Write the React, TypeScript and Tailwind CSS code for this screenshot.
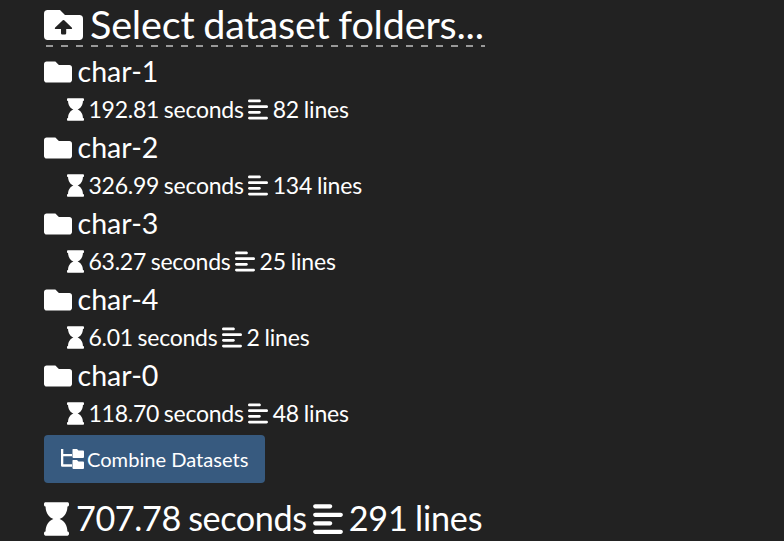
import React from "react";
import { FaHourglass, FaFolder } from "react-icons/fa";
import { FaAlignLeft } from "react-icons/fa6";

const folders = [
  { name: "char-1", seconds: "192.81", lines: 82 },
  { name: "char-2", seconds: "326.99", lines: 134 },
  { name: "char-3", seconds: "63.27", lines: 25 },
  { name: "char-4", seconds: "6.01", lines: 2 },
  { name: "char-0", seconds: "118.70", lines: 48 },
];

function UploadFolder() {
  return (
    <svg viewBox="0 0 39 30" className="h-[30px] w-[39px] shrink-0" fill="currentColor">
      <path fillRule="evenodd" d="M3.7 0H16l5 5h14.3A3.7 3.7 0 0 1 39 8.7v17.6a3.7 3.7 0 0 1-3.7 3.7H3.7A3.7 3.7 0 0 1 0 26.300V3.700A3.700 3.700 0 0 1 3.700 0zM18.800 10.300l-7.600 7.200c-.8.9-.4 1.500.6 1.500H17v4.300q0 1.200 1.200 1.200h2.800q1.200 0 1.200-1.200V19h4.900c1 0 1.400-.6.6-1.500l-7.500-7.200q-.7-.7-1.400 0z" />
    </svg>
  );
}

function TreeIcon() {
  return (
    <svg viewBox="0 0 23 20" className="h-5 w-[23px] shrink-0" fill="currentColor">
      <path d="M0 0h2.300v5H11v2.300H2.300V15.300H11v2.400H1.200Q0 17.700 0 16.500z" />
      <path d="M12 0h4l1.500 1.500H22q1 0 1 1V8q0 1-1 1H12.500q-1 0-1-1V.5q0-.5.5-.5zM12 11h4l1.500 1.500H22q1 0 1 1V19q0 1-1 1H12.500q-1 0-1-1v-7.500q0-.5.5-.5z" />
    </svg>
  );
}

export default function App() {
  return (
    <main className="h-[541px] overflow-hidden bg-[#222] px-11 font-['Lato',sans-serif] whitespace-nowrap text-white">
      <h1 className="flex h-[47px] w-[441px] flex-col text-[39.6px]">
        <span className="flex h-[45px] items-center gap-[7px] pt-[5px] leading-[50px]">
          <UploadFolder />
          <span className="-mt-0.5 tracking-[-0.2px] [word-spacing:-1px]">Select dataset folders...</span>
        </span>
        <span className="h-0.5 w-full bg-[repeating-linear-gradient(90deg,transparent_0_2px,#999_2px_9px,transparent_9px_15px)]" />
      </h1>
      {folders.map((f) => (
        <section key={f.name} className="h-[76px]">
          <div className="flex h-[49px] items-center gap-[5.5px] text-[28.6px]"><FaFolder className="size-7" />{f.name}</div>
          <div className="flex h-[27px] items-center pl-[23px] text-[23px]">
            <FaHourglass className="mr-[4.5px] h-[23px] w-[17px]" />
            <span className="tracking-[-0.25px] [word-spacing:-1px]">{f.seconds} seconds</span>
            <FaAlignLeft className="mr-[4.5px] ml-[4.5px] h-[23px] w-5" />
            <span className="tracking-[-0.15px] [word-spacing:-1px]">{f.lines} lines</span>
          </div>
        </section>
      ))}
      <button className="mt-2 flex h-12 w-[221px] items-center gap-[3px] rounded bg-[#375a7f] pl-[17px] text-[20.1px]"><TreeIcon />Combine Datasets</button>
      <footer className="mt-[11px] flex items-center text-[34.2px]">
        <FaHourglass className="mr-[7px] h-[34px] w-[25px]" />
        <span className="-mt-0.5 tracking-[-0.4px] [word-spacing:-1px]">707.78 seconds</span>
        <FaAlignLeft className="mr-[6px] ml-[6px] h-[34px] w-[30px]" />
        <span className="-mt-0.5 tracking-[-0.2px] [word-spacing:-1px]">291 lines</span>
      </footer>
    </main>
  );
}
